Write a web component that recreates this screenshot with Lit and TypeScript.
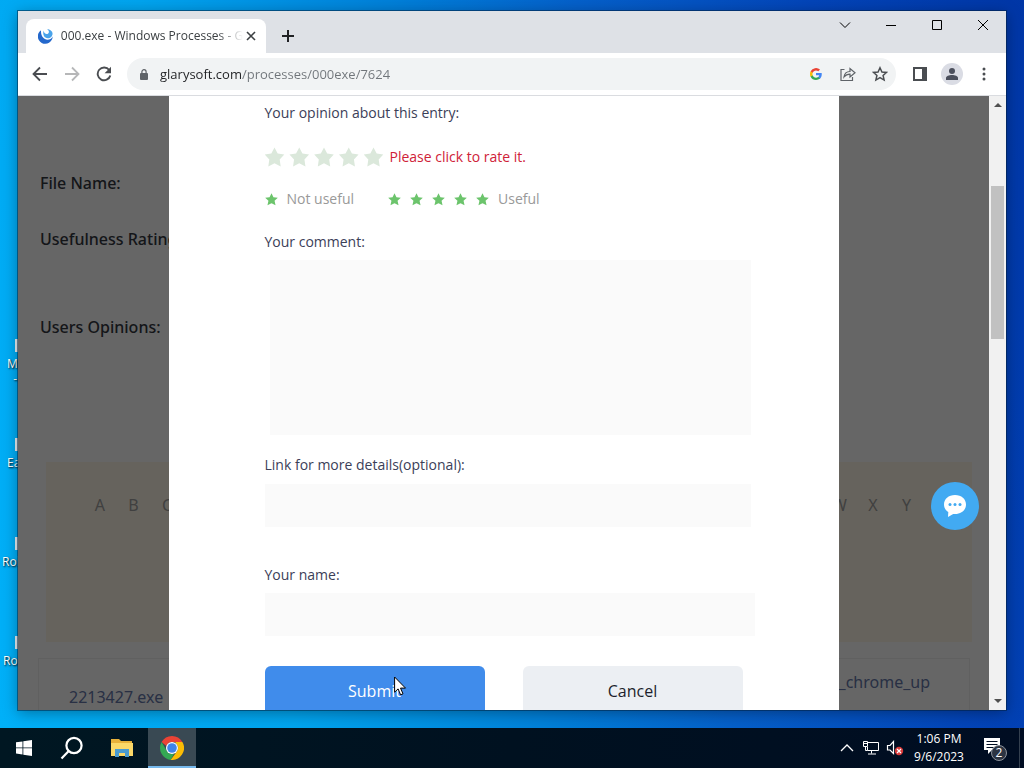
import { LitElement, html, css, svg } from "lit";
import { customElement, state } from "lit/decorators.js";

const STAR = svg`<path d="M10 0.3l3 6.300 6.700.8-5 4.600 1.500 6.900L10 15.700l-6.200 3.200 1.500-6.900-5-4.600 6.700-.8z"/>`;

const chromeLogo = html`<svg viewBox="0 0 24 24" width="24" height="24" aria-hidden="true">
  <path fill="#ea4335" d="M12 0a12 12 0 0 1 10.4 6H12a6 6 0 0 0-5.6 3.9L1.6 6A12 12 0 0 1 12 0z"/>
  <path fill="#34a853" d="M1.6 6l5.2 9a6 6 0 0 0 5.2 3c.8 0 1.5-.1 2.2-.4L10.600 23.900A12 12 0 0 1 1.600 6z"/>
  <path fill="#fbbc05" d="M22.400 6A12 12 0 0 1 10.600 23.900L17.200 15A6 6 0 0 0 16.500 8l-1.500-2z"/>
  <circle cx="12" cy="12" r="6" fill="#fff"/>
  <circle cx="12" cy="12" r="4.800" fill="#3f83ea"/>
</svg>`;

@customElement("browser-bar")
export class BrowserBar extends LitElement {
  static styles = css`
    :host { display: block; font-family: "Open Sans", "Noto Sans", sans-serif; }
    button { border: 0; padding: 0; margin: 0; background: none; display: grid; place-items: center; color: #202124; }
    svg { display: block; }
    .strip { display: flex; height: 42px; background: #dee1e6; padding-left: 8px; }
    .tab { display: flex; align-items: center; width: 240px; box-sizing: border-box; height: 34px; margin-top: 8px;
      padding: 0 8px 0 12px; background: #fff; border-radius: 8px 8px 0 0; }
    .tab-title { flex: 1; margin-left: 8px; font-size: 12px; line-height: 16px; color: #3c4043; white-space: nowrap;
      mask-image: linear-gradient(90deg, #000 86%, transparent); }
    .tab-close { width: 16px; height: 16px; }
    .new-tab { width: 28px; height: 28px; margin: 11px 0 0 8px; }
    .controls { display: flex; margin-left: auto; }
    .controls button { width: 46px; height: 28px; }
    .toolbar { display: flex; align-items: center; height: 42px; padding: 0 6px; background: #fff; border-bottom: 1px solid #dadce0; }
    .nav { width: 32px; height: 32px; }
    .nav[disabled] { opacity: .4; }
    .omnibox { flex: 1; display: flex; align-items: center; height: 32px; border-radius: 16px; background: #f1f3f4;
      margin: 0 8px 0 7px; padding: 0 0 0 13px; }
    .url { flex: 1; min-width: 0; border: 0; outline: 0; padding: 0; margin-left: 12px; font: 13px/20px "Open Sans", "Noto Sans", sans-serif;
      color: transparent; background: linear-gradient(90deg, #202124 82px, #70757a 82px); -webkit-background-clip: text; background-clip: text; }
  `;
  render() {
    return html`
      <div class="strip">
        <div class="tab">
          <svg width="16" height="16" viewBox="0 0 16 16"><path fill="#2468cc" d="M3.300 1.800A8 8 0 1 0 15.800 8.500c-1.200 2.300-3.200 3.500-5.500 3.500C6 12 2.700 7.500 3.300 1.800z"/><path fill="#4aa3ea" d="M6 2.200c-1.300 4.600 1 8.300 4.500 8.300 3 0 5.200-2.400 5.200-5.200C15.700 2.600 12.700.6 9.800.6c2.300 1.200 2.600 3.800.9 4.900C8.700 6.600 6.300 5 6 2.200z"/></svg>
          <span class="tab-title">000.exe - Windows Processes - G</span>
          <button class="tab-close" aria-label="Close tab"><svg width="10" height="10" viewBox="0 0 10 10" stroke="#3c4043" stroke-width="1.600"><path d="M1 1l8 8M9 1l-8 8"/></svg></button>
        </div>
        <button class="new-tab" aria-label="New tab"><svg width="12" height="12" viewBox="0 0 12 12" stroke="#202124" stroke-width="2"><path d="M6 0v12M0 6h12"/></svg></button>
        <div class="controls">
          <button aria-label="Search tabs"><svg width="12" height="12" viewBox="0 0 12 12" fill="none" stroke="#000"><path d="M1 3.500l5 5 5-5"/></svg></button>
          <button aria-label="Minimize"><svg width="10" height="10" viewBox="0 0 10 10"><path fill="#000" d="M0 5h10v1H0z"/></svg></button>
          <button aria-label="Maximize"><svg width="10" height="10" viewBox="0 0 10 10" fill="none" stroke="#000"><path d="M.5.5h9v9h-9z"/></svg></button>
          <button aria-label="Close"><svg width="10" height="10" viewBox="0 0 10 10" stroke="#000"><path d="M0 0l10 10M10 0L0 10"/></svg></button>
        </div>
      </div>
      <div class="toolbar">
        <button class="nav" aria-label="Back"><svg width="16" height="16" viewBox="0 0 16 16" fill="none" stroke="#4a4d51" stroke-width="1.800"><path d="M15 8H2M8 1.500L1.500 8 8 14.500"/></svg></button>
        <button class="nav" aria-label="Forward" disabled><svg width="16" height="16" viewBox="0 0 16 16" fill="none" stroke="#4a4d51" stroke-width="1.800"><path d="M1 8h13M8 1.500L14.500 8 8 14.500"/></svg></button>
        <button class="nav" aria-label="Reload"><svg width="16" height="16" viewBox="0 0 16 16" fill="none"><path stroke="#4a4d51" stroke-width="1.900" d="M13.200 4A6.400 6.400 0 1 0 14.300 9.500"/><path fill="#4a4d51" d="M15 .8v6.400H8.600z"/></svg></button>
        <div class="omnibox">
          <svg width="8" height="11" viewBox="0 0 8 11"><path fill="none" stroke="#5f6368" stroke-width="1.200" d="M1.900 5V2.800a2.100 2.100 0 0 1 4.200 0V5"/><rect y="4" width="8" height="7" rx="1" fill="#5f6368"/></svg>
          <input class="url" aria-label="Address" spellcheck="false" value="glarysoft.com/processes/000exe/7624">
          <button class="nav" aria-label="Google"><svg width="12" height="12" viewBox="0 0 24 24"><path fill="#4285f4" d="M23.500 12.300c0-.9-.1-1.600-.2-2.300H12v4.600h6.500a5.600 5.600 0 0 1-2.400 3.700v3h3.900c2.300-2.100 3.500-5.200 3.500-9z"/><path fill="#34a853" d="M12 24c3.200 0 6-1.100 8-2.900l-3.900-3c-1.100.7-2.500 1.200-4.100 1.200-3.100 0-5.800-2.100-6.700-5h-4v3.100A12 12 0 0 0 12 24z"/><path fill="#fbbc05" d="M5.300 14.300a7.200 7.200 0 0 1 0-4.600V6.600h-4a12 12 0 0 0 0 10.800z"/><path fill="#ea4335" d="M12 4.800c1.800 0 3.300.6 4.600 1.800L20 3.200A12 12 0 0 0 1.300 6.600l4 3.100c.9-2.900 3.600-4.900 6.700-4.900z"/></svg></button>
          <button class="nav" aria-label="Share"><svg width="16" height="14" viewBox="0 0 16 14" fill="none" stroke="#5f6368" stroke-width="1.200"><path d="M4.500 2.500H1v11h11.500V10"/><path d="M4 10c.5-3.800 2.700-5.500 6-5.500V1.500l5 4.200-5 4.200V7.200C7.500 7.200 5.600 8 4 10z"/></svg></button>
          <button class="nav" aria-label="Bookmark"><svg width="16" height="16" viewBox="0 0 14 14" fill="none" stroke="#4a4d51" stroke-width="1.300"><path d="M7 1.500l1.700 3.700 4 .4-3 2.700.9 4L7 10.200l-3.600 2.100.9-4-3-2.700 4-.4z"/></svg></button>
        </div>
        <button class="nav" aria-label="Side panel"><svg width="14" height="14" viewBox="0 0 14 14"><path fill="#4a4d51" fill-rule="evenodd" d="M0 0h14v14H0zM2 2v10h7V2z"/></svg></button>
        <button class="nav" aria-label="Profile"><svg width="22" height="22" viewBox="0 0 22 22"><circle cx="11" cy="11" r="11" fill="#dadce4"/><circle cx="11" cy="8" r="3" fill="#4b4f5c"/><path fill="#4b4f5c" d="M5 17v-2c0-2 3-3 6-3s6 1 6 3v2z"/></svg></button>
        <button class="nav" aria-label="Menu"><svg width="4" height="14" viewBox="0 0 4 14" fill="#4a4d51"><circle cx="2" cy="2" r="1.500"/><circle cx="2" cy="7" r="1.500"/><circle cx="2" cy="12" r="1.500"/></svg></button>
      </div>`;
  }
}

@customElement("opinion-form")
export class OpinionForm extends LitElement {
  @state() rating = 0;
  static styles = css`
    :host { display: block; font: 14px/20px "Open Sans", "Noto Sans", sans-serif; color: #3b4058; }
    form { display: flex; flex-direction: column; padding: 7px 84px 0 96px; }
    fieldset { display: contents; }
    legend { padding: 0; }
    .rate { display: flex; align-items: center; height: 20px; margin-top: 24px; gap: 6px; }
    .stars { display: flex; justify-content: space-between; width: 119px; }
    .star { appearance: none; margin: 0; width: 20px; height: 20px; background: #dbe8db;
      clip-path: polygon(50% 2%, 66% 32%, 99% 38%, 76% 62%, 81% 97%, 50% 81%, 19% 97%, 24% 62%, 1% 38%, 34% 32%); }
    .star.on { background: #65c466; }
    .hint { color: #cf2238; }
    .legend { display: flex; align-items: center; color: #999; margin: 22px 0 23px; }
    .mini { display: flex; gap: 9px; margin-right: 9px; fill: #6cc46c; }
    .legend span { margin-right: 34px; }
    textarea, input[type="text"] { display: block; box-sizing: border-box; border: 0; padding: 8px; background: #fafafa; font: inherit; color: inherit; resize: none; outline: 0; }
    #comment { height: 175px; margin: 8px 4px 20px 5px; }
    #link { height: 43px; margin: 9px 4px 38px 0; }
    #name { height: 43px; margin: 8px 0 30px; }
    .actions { display: flex; gap: 38px; }
    .actions button { width: 220px; height: 50px; border: 0; border-radius: 6px; padding: 0; font: 16px/24px "Open Sans", "Noto Sans", sans-serif; }
    .submit { background: #408ceb; color: #fff; }
    .cancel { background: #eceff3; color: #1d1f2c; }
  `;
  private mini(n: number) {
    return html`<div class="mini">${Array.from({ length: n }, () => html`<svg width="13" height="13" viewBox="0 0 20 20" aria-hidden="true">${STAR}</svg>`)}</div>`;
  }
  render() {
    return html`<form @submit=${(e: Event) => e.preventDefault()}>
      <fieldset>
        <legend>Your opinion about this entry:</legend>
        <div class="rate">
          <div class="stars">${[1, 2, 3, 4, 5].map((n) => html`<input class="star ${n <= this.rating ? "on" : ""}" type="radio" name="rating" aria-label="${n} of 5" @change=${() => (this.rating = n)}>`)}</div>
          <span class="hint">Please click to rate it.</span>
        </div>
        <div class="legend">${this.mini(1)}<span>Not useful</span>${this.mini(5)}<span>Useful</span></div>
      </fieldset>
      <label for="comment">Your comment:</label>
      <textarea id="comment"></textarea>
      <label for="link">Link for more details(optional):</label>
      <input id="link" type="text">
      <label for="name">Your name:</label>
      <input id="name" type="text">
      <div class="actions">
        <button class="submit" type="submit">Submit</button>
        <button class="cancel" type="button">Cancel</button>
      </div>
    </form>`;
  }
}

@customElement("process-page")
export class ProcessPage extends LitElement {
  static styles = css`
    :host { display: block; background: #fff; font: 16px/24px "Noto Sans", "Open Sans", sans-serif; color: #34373f; }
    .facts { display: flex; flex-direction: column; padding: 75px 22px 0; height: 291px; font-weight: 500; }
    .facts p { margin: 0 0 32px; }
    .facts p + p { margin-bottom: 64px; }
    .alphabet { box-sizing: border-box; height: 180px; margin: 0 17px 16px 28px; padding: 31px 15px 0 37px; background: #fff8e9; }
    .letters { display: grid; grid-template-columns: repeat(26, 1fr); text-align: center; }
    .letters a { color: #a0a0a0; text-decoration: none; }
    .list { display: flex; justify-content: space-between; margin: 0 19px 0 20px; height: 120px; border: 1px solid #f0f0f0; box-sizing: border-box; padding: 11px 39px 0 30px; }
    .list a { color: #6678aa; text-decoration: none; }
    .first { padding-top: 15px; }
  `;
  render() {
    return html`
      <div class="facts"><p>File Name:</p><p>Usefulness Rating:</p><p>Users Opinions:</p></div>
      <div class="alphabet"><nav class="letters">${[..."ABCDEFGHIJKLMNOPQRSTUVWXYZ"].map((c) => html`<a href="#">${c}</a>`)}</nav></div>
      <div class="list"><a class="first" href="#">2213427.exe</a><a href="#">_chrome_up</a></div>`;
  }
}

@customElement("task-bar")
export class TaskBar extends LitElement {
  static styles = css`
    :host { display: flex; height: 40px; background: linear-gradient(90deg, #001722, #001120 50%, #000d22); color: #fff; font: 12px/18px "Open Sans", "Noto Sans", sans-serif; }
    button { border: 0; padding: 0; width: 48px; background: none; color: inherit; font: inherit; display: grid; place-items: center; }
    svg { display: block; }
    .files, .chrome { margin-left: 2px; }
    .chrome { box-sizing: border-box; background: #394953; border-bottom: 2px solid #76b9ed; padding-top: 2px; }
    .tray { display: flex; margin-left: auto; }
    .tray button { width: 24px; }
    .tray .clock { width: 64px; text-align: center; }
    .tray .notes { width: 48px; }
    .peek { width: 4px; border-left: 1px solid #34404f; }
    .count { font-size: 12px; }
  `;
  render() {
    return html`
      <button aria-label="Start"><svg width="16" height="16" viewBox="0 0 16 16" fill="#fff"><path d="M0 2.300l6.500-.9v6.100H0zM7.300 1.300L16 0v7.500H7.300zM0 8.300h6.500v6.100L0 13.500zM7.300 8.300H16V16l-8.700-1.300z"/></svg></button>
      <button aria-label="Search"><svg width="24" height="24" viewBox="0 0 24 24" fill="none" stroke="#fff" stroke-width="2.200"><circle cx="14" cy="9.500" r="7.600"/><path d="M8.500 15.200L1.500 22.500"/></svg></button>
      <button class="files" aria-label="File Explorer"><svg width="22" height="20" viewBox="0 0 22 20"><path fill="#e8b13a" d="M0 1h8l2 2h11v4H0z"/><path fill="#fbd868" d="M0 5h22v13H0z"/><path fill="#4a9bcf" d="M4 11h14v8h-4v-4H8v4H4z"/></svg></button>
      <button class="chrome" aria-label="Google Chrome">${chromeLogo}</button>
      <div class="tray">
        <button aria-label="Show hidden icons"><svg width="14" height="8" viewBox="0 0 14 8" fill="none" stroke="#fff" stroke-width="1.300"><path d="M1 7l6-6 6 6"/></svg></button>
        <button aria-label="Network"><svg width="16" height="14" viewBox="0 0 16 14" fill="none" stroke="#fff"><path d="M5 1.500h10.500v8H4.500V6M8.500 9.500v3M5 13h8M.5.500h4v5h-4zM.5 2.500h4M2.500 5.500v4h2"/></svg></button>
        <button aria-label="Volume muted"><svg width="18" height="16" viewBox="0 0 18 16"><path fill="none" stroke="#fff" stroke-width="1.200" d="M1.500 5.500H4l3.500-4v12L4 10H1.500z"/><circle cx="13" cy="11" r="4.200" fill="#d93a3a"/><path stroke="#fff" stroke-width="1.200" d="M11 9l4 4M15 9l-4 4"/></svg></button>
        <button class="clock"><span>1:06 PM<br>9/6/2023</span></button>
        <button class="notes" aria-label="Notifications"><svg width="26" height="26" viewBox="0 0 26 26"><path fill="#fff" d="M2 3h16v12h-8l-4 4v-4H2z"/><path stroke="#000d22" d="M4.500 6.500h11M4.500 9.500h11M4.500 12.500h7"/><circle cx="17" cy="18" r="7.500" fill="#2c3442" stroke="#8c929b"/><text class="count" x="17" y="22" text-anchor="middle" fill="#fff">2</text></svg></button>
        <div class="peek"></div>
      </div>`;
  }
}

@customElement("app-root")
export class AppRoot extends LitElement {
  static styles = css`
    :host { display: flex; flex-direction: column; height: 100vh; position: relative; overflow: hidden; }
    .desktop { flex: 1; min-height: 0; display: flex; box-sizing: border-box; padding: 11px 18px 18px; position: relative;
      background: linear-gradient(78deg, #00b0f8 0, #00a4ee 25%, #0082da 45%, #0560ca 62%, #0344b8 82%, #0036a6); }
    .shortcut { position: absolute; width: 70px; color: #fff; font: 12px/15px "Open Sans", "Noto Sans", sans-serif; text-shadow: 1px 1px 2px #000; white-space: pre; }
    .sheet { position: absolute; left: 15px; width: 20px; height: 13px; background: #e8eef2; }
    .window { flex: 1; min-width: 0; display: flex; flex-direction: column; position: relative; box-shadow: 0 0 0 1px rgba(0, 30, 60, .5), 0 3px 14px rgba(0, 0, 0, .35); }
    .view { flex: 1; min-height: 0; display: flex; overflow: hidden; }
    .stage { flex: 1; min-width: 0; display: grid; grid-template: minmax(0, 1fr) / minmax(0, 1fr); overflow: hidden; }
    .stage > * { grid-area: 1 / 1; }
    .overlay { display: flex; justify-content: center; background: rgba(0, 0, 0, .6); z-index: 1; }
    .dialog { width: 670px; background: #fff; }
    .scroll { width: 17px; background: #f1f1f1; display: flex; flex-direction: column; align-items: center; }
    .scroll svg { flex: none; display: block; }
    .track { flex: 1; }
    .thumb { width: 13px; height: 153px; margin-top: 73px; background: #c1c1c1; }
    .chat { position: absolute; right: 27px; bottom: 180px; z-index: 2; width: 48px; height: 48px; border: 0; border-radius: 50%; padding: 0; background: #42aaf2; display: grid; place-items: center; }
    .cursor { position: absolute; left: 394px; top: 676px; z-index: 5; }
  `;
  render() {
    const icons: [string, number, number][] = [["M\n  -", 7, 356], ["Ea", 7, 455], ["Rol", 2, 554], ["Rol", 3, 653]];
    return html`
      <div class="desktop">
        ${icons.map(([t, x, y]) => html`<div class="sheet" style="top:${y - 17}px"></div><div class="shortcut" style="left:${x}px;top:${y}px">${t}</div>`)}
        <div class="window">
          <browser-bar></browser-bar>
          <div class="view">
            <div class="stage">
              <process-page></process-page>
              <div class="overlay"><opinion-form class="dialog" role="dialog"></opinion-form></div>
            </div>
            <div class="scroll">
              <svg width="17" height="17" viewBox="0 0 17 17"><path fill="#505050" d="M5 11l4-4 4 4z"/></svg>
              <div class="track"><div class="thumb"></div></div>
              <svg width="17" height="17" viewBox="0 0 17 17"><path fill="#505050" d="M5 6l4 4 4-4z"/></svg>
            </div>
          </div>
          <button class="chat" aria-label="Chat"><svg width="24" height="24" viewBox="0 0 24 24"><path fill="#fff" d="M12 1C5.500 1 1 5 1 10.500c0 3.300 1.700 6 4.300 7.600L5 23l5.200-3.100c.6.1 1.200.1 1.800.1 6.500 0 11-4 11-9.500S18.500 1 12 1z"/><g fill="#42aaf2"><circle cx="7" cy="10.500" r="1.500"/><circle cx="12" cy="10.500" r="1.500"/><circle cx="17" cy="10.500" r="1.500"/></g></svg></button>
        </div>
      </div>
      <task-bar></task-bar>
      <svg class="cursor" width="13" height="20" viewBox="0 0 13 20" aria-hidden="true"><path fill="#fff" stroke="#000" d="M.6 1v15.200l3.500-3.300 2.500 5.900 2.400-1-2.500-5.700h5z"/></svg>`;
  }
}
